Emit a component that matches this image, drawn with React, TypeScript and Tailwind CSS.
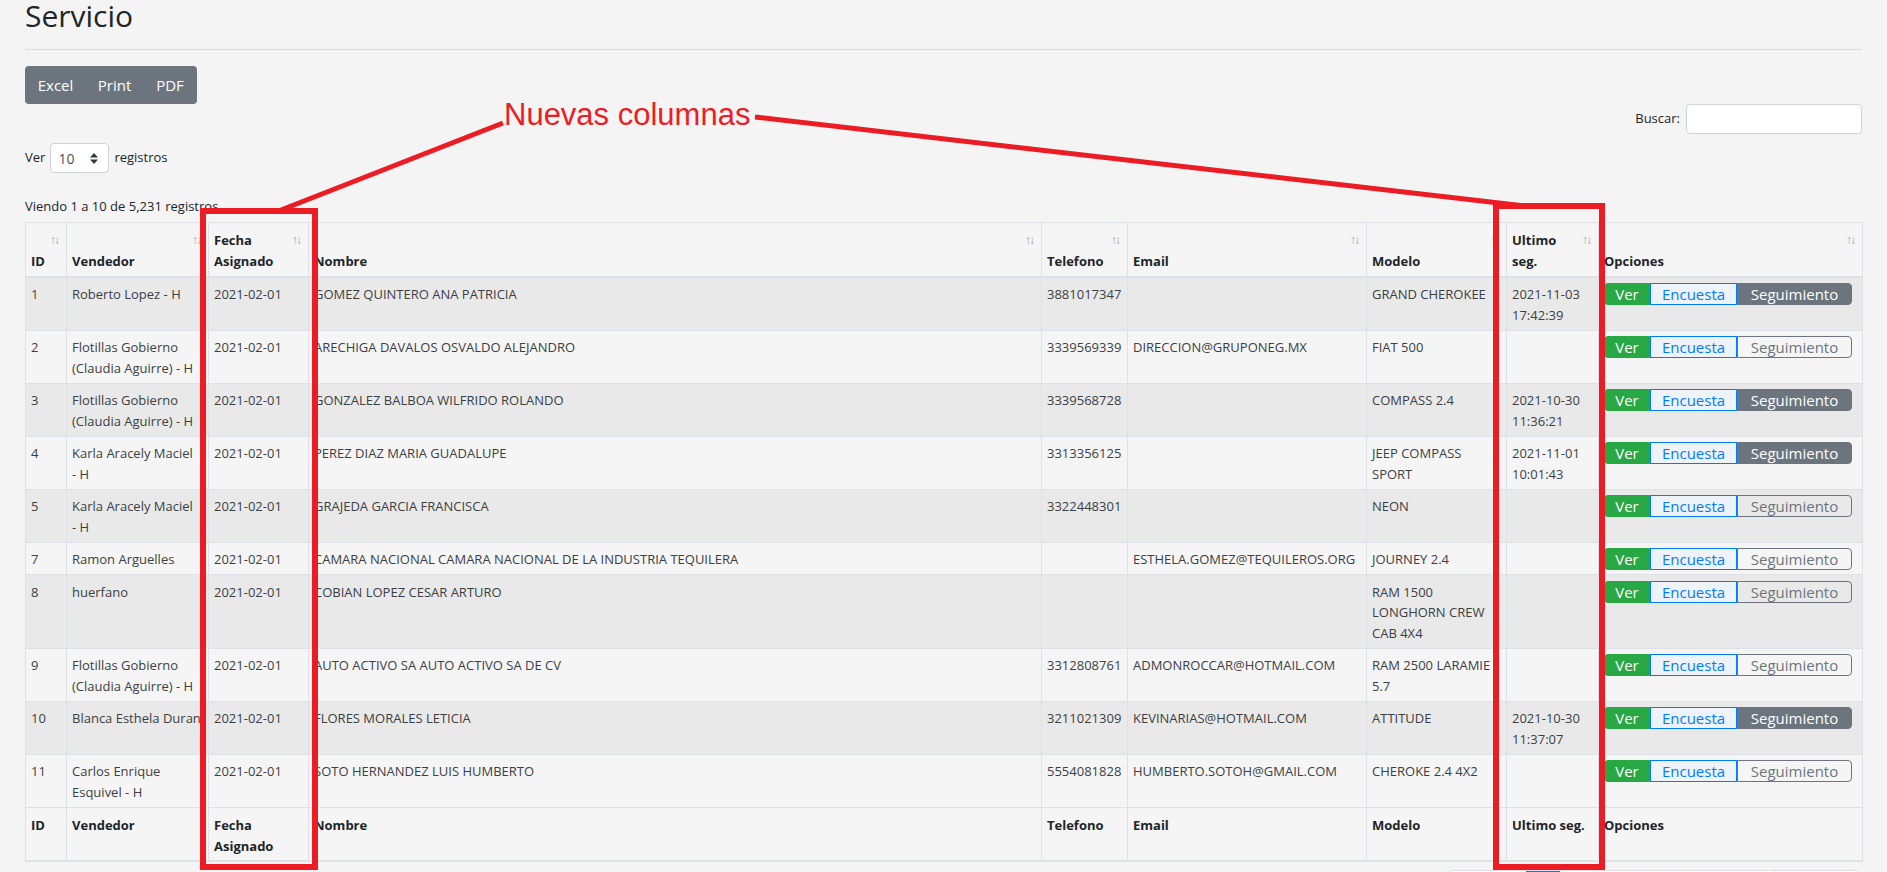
import React from 'react';

type Row = {
  id: string;
  vendedor: string[];
  fecha: string;
  nombre: string;
  telefono: string;
  email: string;
  modelo: string[];
  ultimo: string[];
  seguido: boolean;
};

const rows: Row[] = [
  { id: '1', vendedor: ['Roberto Lopez - H'], fecha: '2021-02-01', nombre: 'GOMEZ QUINTERO ANA PATRICIA', telefono: '3881017347', email: '', modelo: ['GRAND CHEROKEE'], ultimo: ['2021-11-03', '17:42:39'], seguido: true },
  { id: '2', vendedor: ['Flotillas Gobierno', '(Claudia Aguirre) - H'], fecha: '2021-02-01', nombre: 'ARECHIGA DAVALOS OSVALDO ALEJANDRO', telefono: '3339569339', email: 'DIRECCION@GRUPONEG.MX', modelo: ['FIAT 500'], ultimo: [], seguido: false },
  { id: '3', vendedor: ['Flotillas Gobierno', '(Claudia Aguirre) - H'], fecha: '2021-02-01', nombre: 'GONZALEZ BALBOA WILFRIDO ROLANDO', telefono: '3339568728', email: '', modelo: ['COMPASS 2.4'], ultimo: ['2021-10-30', '11:36:21'], seguido: true },
  { id: '4', vendedor: ['Karla Aracely Maciel', '- H'], fecha: '2021-02-01', nombre: 'PEREZ DIAZ MARIA GUADALUPE', telefono: '3313356125', email: '', modelo: ['JEEP COMPASS', 'SPORT'], ultimo: ['2021-11-01', '10:01:43'], seguido: true },
  { id: '5', vendedor: ['Karla Aracely Maciel', '- H'], fecha: '2021-02-01', nombre: 'GRAJEDA GARCIA FRANCISCA', telefono: '3322448301', email: '', modelo: ['NEON'], ultimo: [], seguido: false },
  { id: '7', vendedor: ['Ramon Arguelles'], fecha: '2021-02-01', nombre: 'CAMARA NACIONAL CAMARA NACIONAL DE LA INDUSTRIA TEQUILERA', telefono: '', email: 'ESTHELA.GOMEZ@TEQUILEROS.ORG', modelo: ['JOURNEY 2.4'], ultimo: [], seguido: false },
  { id: '8', vendedor: ['huerfano'], fecha: '2021-02-01', nombre: 'COBIAN LOPEZ CESAR ARTURO', telefono: '', email: '', modelo: ['RAM 1500', 'LONGHORN CREW', 'CAB 4X4'], ultimo: [], seguido: false },
  { id: '9', vendedor: ['Flotillas Gobierno', '(Claudia Aguirre) - H'], fecha: '2021-02-01', nombre: 'AUTO ACTIVO SA AUTO ACTIVO SA DE CV', telefono: '3312808761', email: 'ADMONROCCAR@HOTMAIL.COM', modelo: ['RAM 2500 LARAMIE', '5.7'], ultimo: [], seguido: false },
  { id: '10', vendedor: ['Blanca Esthela Duran'], fecha: '2021-02-01', nombre: 'FLORES MORALES LETICIA', telefono: '3211021309', email: 'KEVINARIAS@HOTMAIL.COM', modelo: ['ATTITUDE'], ultimo: ['2021-10-30', '11:37:07'], seguido: true },
  { id: '11', vendedor: ['Carlos Enrique', 'Esquivel - H'], fecha: '2021-02-01', nombre: 'SOTO HERNANDEZ LUIS HUMBERTO', telefono: '5554081828', email: 'HUMBERTO.SOTOH@GMAIL.COM', modelo: ['CHEROKE 2.4 4X2'], ultimo: [], seguido: false },
];

const widths = [41, 142, 100, 733, 86, 239, 140, 92, 264];

const Lines = ({ lines }: { lines: string[] }) => (
  <>
    {lines.map((l, i) => (
      <div key={i} className="whitespace-nowrap">{l}</div>
    ))}
  </>
);

const SortIcon = () => (
  <span className="absolute top-[7px] right-[8px] text-[12px] leading-[20px] tracking-[-2px] text-[#a8a8a8]">↑↓</span>
);

const headers: string[][] = [['ID'], ['Vendedor'], ['Fecha', 'Asignado'], ['Nombre'], ['Telefono'], ['Email'], ['Modelo'], ['Ultimo', 'seg.'], ['Opciones']];
const footers: string[][] = [['ID'], ['Vendedor'], ['Fecha', 'Asignado'], ['Nombre'], ['Telefono'], ['Email'], ['Modelo'], ['Ultimo seg.'], ['Opciones']];

const cell = 'border-l border-[#dee2e6] first:border-l-0 px-[5px] pt-[6.5px] pb-[4px] align-top overflow-visible';

export default function App() {
  return (
    <div className="relative min-h-screen bg-[#f4f4f4] font-['Open_Sans',sans-serif] text-[13px] text-[#3b3f44]">
      <div className="px-[25px]">
        {/* Title */}
        <h1 className="text-[30px] font-medium leading-[31px] text-[#212529]">Servicio</h1>
        <hr className="mt-[18px] border-t border-[#dcdcdc]" />

        {/* Export buttons */}
        <div className="mt-[16px] flex h-[38px] w-fit rounded-[4px] bg-[#6c757d] text-[15px] font-medium text-white">
          <span className="flex w-[61px] items-center justify-center">Excel</span>
          <span className="flex w-[57px] items-center justify-center">Print</span>
          <span className="flex w-[54px] items-center justify-center">PDF</span>
        </div>

        {/* Search */}
        <div className="flex justify-end">
          <label className="flex items-center gap-[6px] text-[13px] text-[#212529]">
            Buscar:
            <span className="block h-[30px] w-[176px] rounded-[4px] border border-[#ced4da] bg-white" />
          </label>
        </div>

        {/* Length */}
        <div className="mt-[9px] flex items-center gap-[5px] text-[13px] text-[#212529]">
          <span>Ver</span>
          <span className="flex h-[30px] w-[59px] items-center justify-between rounded-[4px] border border-[#ced4da] bg-white pl-[7px] pr-[10px] text-[14px] text-[#495057]">
            10
            <svg width="8" height="11" viewBox="0 0 8 11">
              <path d="M4 0 L8 4.5 H0 Z M4 11 L0 6.5 H8 Z" fill="#343a40" />
            </svg>
          </span>
          <span>registros</span>
        </div>

        <div className="mt-[23px] leading-[20px] text-[#212529]">Viendo 1 a 10 de 5,231 registros</div>

        {/* Table */}
        <table className="mt-[6px] w-[1837px] table-fixed border-collapse border border-[#dee2e6] leading-[20.75px]">
          <colgroup>
            {widths.map((w, i) => (
              <col key={i} style={{ width: w }} />
            ))}
          </colgroup>
          <thead>
            <tr className="border-b-2 border-[#dee2e6] bg-[#f5f5f5]">
              {headers.map((h, i) => (
                <th key={i} className="relative border-l border-[#dee2e6] first:border-l-0 px-[5px] pt-[7px] pb-[4px] text-left align-bottom font-bold text-[#212529]">
                  <Lines lines={h} />
                  <SortIcon />
                </th>
              ))}
            </tr>
          </thead>
          <tbody>
            {rows.map((r, i) => (
              <tr key={r.id} className={`border-t border-[#dee2e6] ${i % 2 === 0 ? 'bg-[#e9e9e9]' : 'bg-[#f5f5f5]'}`}>
                <td className={cell}>{r.id}</td>
                <td className={cell}><Lines lines={r.vendedor} /></td>
                <td className={cell}>{r.fecha}</td>
                <td className={cell}><div className="whitespace-nowrap">{r.nombre}</div></td>
                <td className={cell}>{r.telefono}</td>
                <td className={cell}><div className="whitespace-nowrap">{r.email}</div></td>
                <td className={cell}><Lines lines={r.modelo} /></td>
                <td className={cell}><Lines lines={r.ultimo} /></td>
                <td className="border-l border-[#dee2e6] px-[5px] pt-[5.5px] pb-[4px] align-top">
                  <div className="flex h-[22px] text-[15px] leading-[20px]">
                    <span className="flex w-[46px] items-center justify-center rounded-l-[4px] border border-[#28a745] bg-[#28a745] text-white">Ver</span>
                    <span className="flex w-[87px] items-center justify-center border border-[#007bff] bg-[#eef3f9] text-[#007bff]">Encuesta</span>
                    {r.seguido ? (
                      <span className="flex w-[115px] items-center justify-center rounded-r-[4px] border border-[#6c757d] bg-[#6c757d] text-white">Seguimiento</span>
                    ) : (
                      <span className="flex w-[115px] items-center justify-center rounded-r-[4px] border border-[#6c757d] text-[#6c757d]">Seguimiento</span>
                    )}
                  </div>
                </td>
              </tr>
            ))}
          </tbody>
          <tfoot>
            <tr className="border-t border-b-2 border-[#dee2e6] bg-[#f5f5f5]">
              {footers.map((h, i) => (
                <th key={i} className="border-l border-[#dee2e6] first:border-l-0 px-[5px] pt-[7px] pb-[4px] text-left align-top font-bold text-[#212529]">
                  <Lines lines={h} />
                </th>
              ))}
            </tr>
          </tfoot>
        </table>

        {/* Pagination */}
        <div className="mt-[8px] flex justify-end pr-[3px] text-[13px]">
          <div className="flex h-[38px] rounded-[4px] border border-[#dee2e6] bg-white">
            <span className="flex w-[76px] items-center justify-center text-[#6c757d]">Anterior</span>
            <span className="flex w-[34px] items-center justify-center bg-[#007bff] text-white">1</span>
            <span className="flex w-[32px] items-center justify-center border-l border-[#dee2e6] text-[#007bff]">2</span>
            <span className="flex w-[33px] items-center justify-center border-l border-[#dee2e6] text-[#007bff]">3</span>
            <span className="flex w-[32px] items-center justify-center border-l border-[#dee2e6] text-[#007bff]">4</span>
            <span className="flex w-[34px] items-center justify-center border-l border-[#dee2e6] text-[#007bff]">5</span>
            <span className="flex w-[35px] items-center justify-center border-l border-[#dee2e6] text-[#6c757d]">…</span>
            <span className="flex w-[49px] items-center justify-center border-l border-[#dee2e6] text-[#007bff]">524</span>
            <span className="flex w-[83px] items-center justify-center border-l border-[#dee2e6] text-[#007bff]">Siguiente</span>
          </div>
        </div>
      </div>

      {/* Annotation overlay */}
      <div className="pointer-events-none absolute inset-0">
        <svg width="1887" height="900" className="absolute left-0 top-0">
          <rect x="203" y="211" width="112" height="656" fill="none" stroke="#ec1c24" strokeWidth="6" />
          <rect x="1496" y="206" width="106" height="661" fill="none" stroke="#ec1c24" strokeWidth="6" />
          <line x1="281" y1="210" x2="503" y2="123" stroke="#ec1c24" strokeWidth="5" />
          <line x1="755" y1="117" x2="1525" y2="206" stroke="#ec1c24" strokeWidth="5" />
        </svg>
        <span className="absolute left-[504px] top-[97px] font-['Liberation_Sans',Arial,sans-serif] text-[31px] leading-[35px] text-[#ec1c24]">
          Nuevas columnas
        </span>
      </div>
    </div>
  );
}
